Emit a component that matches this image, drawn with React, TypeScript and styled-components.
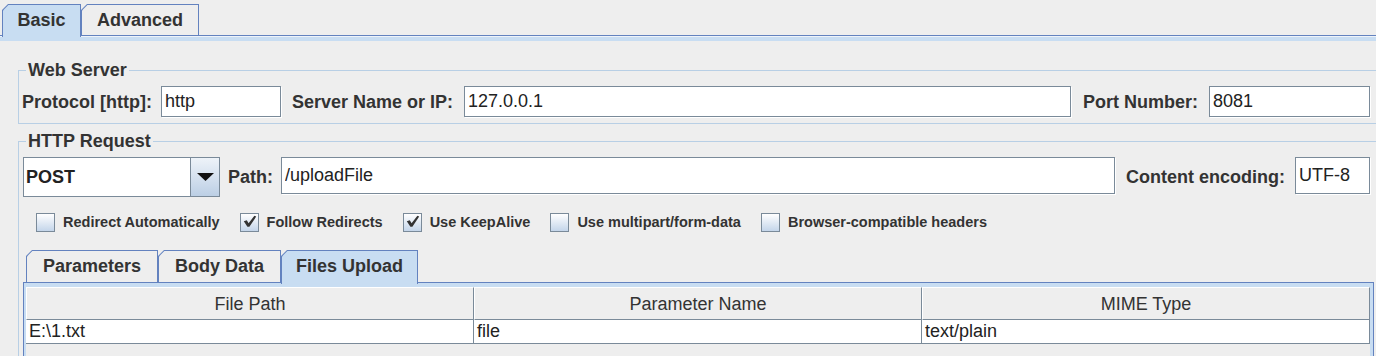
import styled, { createGlobalStyle } from "styled-components";

const GlobalStyle = createGlobalStyle`
  html, body {
    margin: 0;
    padding: 0;
    background: #eeeeee;
    overflow: hidden;
  }
  body {
    font-family: "Liberation Sans", Arial, sans-serif;
    color: #333333;
  }
  #root {
    width: 1380px;
  }
`;

const Window = styled.div`
  height: 352px;
  padding-top: 4px;
  background: #eeeeee;
  overflow: hidden;
`;

// tab strip (Metal look: cut top-left corner, blue band under the strip)
const TabRow = styled.div<{ $indent: number; $height: number }>`
  display: flex;
  align-items: flex-end;
  height: ${(p) => p.$height}px;
  padding-left: ${(p) => p.$indent}px;
  border-bottom: 1px solid #6382bf;
`;

const Tab = styled.div<{ $selected?: boolean; $height: number; $width: number }>`
  position: relative;
  z-index: ${(p) => (p.$selected ? 1 : 0)};
  box-sizing: border-box;
  width: ${(p) => p.$width}px;
  height: ${(p) => p.$height + (p.$selected ? 2 : 0)}px;
  margin-bottom: ${(p) => (p.$selected ? -2 : 0)}px;
  padding: 1px 1px 0;
  background: #6382bf;
  clip-path: polygon(0 6px, 6px 0, 100% 0, 100% 100%, 0 100%);
`;

const TabFace = styled.div<{ $selected?: boolean }>`
  box-sizing: border-box;
  height: 100%;
  padding-bottom: ${(p) => (p.$selected ? 2 : 0)}px;
  display: flex;
  align-items: center;
  justify-content: center;
  background: ${(p) => (p.$selected ? "#c8ddf2" : "#eeeeee")};
  clip-path: polygon(0 5.4px, 5.4px 0, 100% 0, 100% 100%, 0 100%);
  font-weight: bold;
  font-size: 18px;
  color: #333333;
  white-space: nowrap;
`;

const TabBand = styled.div`
  height: 4px;
  border-top: 1px solid #eef3f9;
  background: #c8ddf2;
`;

const Content = styled.div`
  padding-top: 20px;
`;

const Group = styled.fieldset`
  margin: 0 0 8px 18px;
  padding: 7px 5px 5px 4px;
  border: 1px solid #b8cfe5;
  min-width: 0;
`;

const GroupTitle = styled.legend`
  margin-left: 3px;
  padding: 0 2px;
  font-weight: bold;
  font-size: 18px;
  line-height: 18px;
  color: #333333;
`;

const FieldRow = styled.div<{ $height: number; $shift?: number }>`
  display: flex;
  align-items: flex-start;
  height: ${(p) => p.$height}px;
  margin: 0 4px 0 ${(p) => p.$shift ?? 0}px;
`;

const FieldLabel = styled.label<{ $before?: number; $after: number }>`
  align-self: center;
  padding-top: 1px;
  margin: 0 ${(p) => p.$after}px 0 ${(p) => p.$before ?? 0}px;
  font-weight: bold;
  font-size: 18px;
  color: #333333;
  white-space: nowrap;
`;

const TextField = styled.input<{ $width?: number; $height: number }>`
  box-sizing: border-box;
  flex: ${(p) => (p.$width ? `0 0 ${p.$width}px` : "1 1 auto")};
  min-width: 0;
  height: ${(p) => p.$height}px;
  margin: 0;
  padding: 0 3px;
  border: 1px solid #7a8a99;
  border-radius: 0;
  box-shadow: 1px 1px 0 #ffffff;
  background: #ffffff;
  font-family: "Liberation Sans", Arial, sans-serif;
  font-size: 18px;
  color: #222222;
  outline: none;
`;

const Combo = styled.div`
  box-sizing: border-box;
  display: flex;
  width: 197px;
  height: 40px;
  border: 1px solid #7a8a99;
  background: #ffffff;
`;

const ComboValue = styled.div`
  flex: 1;
  display: flex;
  align-items: center;
  padding-left: 2px;
  font-weight: bold;
  font-size: 18px;
  color: #222222;
`;

const ComboButton = styled.div`
  width: 28px;
  display: flex;
  align-items: center;
  justify-content: center;
  border-left: 1px solid #7a8a99;
  background: linear-gradient(to bottom, #eef3f9, #bccfe5);
`;

const CheckRow = styled.div`
  display: flex;
  align-items: center;
  gap: 20px;
  height: 34px;
  margin-top: 8px;
  padding-left: 13px;
`;

const CheckItem = styled.label`
  display: flex;
  align-items: center;
  gap: 8px;
  font-weight: bold;
  font-size: 14.5px;
  color: #333333;
  white-space: nowrap;
`;

const CheckBox = styled.span`
  box-sizing: border-box;
  width: 19px;
  height: 19px;
  border: 1px solid #7a8a99;
  background: linear-gradient(to bottom, #ffffff, #c4d5ea);
  display: flex;
`;

const InnerTabs = styled.div`
  margin-top: 11px;
`;

const TabPanel = styled.div`
  height: 120px;
  padding: 4px 3px 0 2px;
  background: #c8ddf2;
  border-left: 1px solid #6382bf;
  border-right: 1px solid #6382bf;
`;

const Viewport = styled.div`
  height: 100%;
  background: #eeeeee;
`;

const TableRow = styled.div<{ $head?: boolean }>`
  display: grid;
  grid-template-columns: repeat(3, 448px);
  height: ${(p) => (p.$head ? 33 : 24)}px;
`;

const HeadCell = styled.div`
  box-sizing: border-box;
  display: flex;
  align-items: center;
  justify-content: center;
  padding-top: 1px;
  border-top: 1px solid #ffffff;
  border-left: 1px solid #ffffff;
  border-right: 1px solid #7a8a99;
  border-bottom: 1px solid #7a8a99;
  background: #eeeeee;
  font-size: 18px;
  color: #333333;
`;

const Cell = styled.div`
  box-sizing: border-box;
  display: flex;
  align-items: center;
  padding-left: 3px;
  border-right: 1px solid #7a8a99;
  border-bottom: 1px solid #7a8a99;
  background: #ffffff;
  font-size: 18px;
  color: #222222;
`;

function Check({ checked }: { checked?: boolean }) {
  return (
    <CheckBox>
      {checked && (
        <svg width="17" height="17" viewBox="0 0 17 17">
          <polygon points="2.8,7.2 5.8,6.2 7.6,9.2 13.4,1.8 15.2,2.6 8.4,12.8 6.4,12.8" fill="#333333" />
        </svg>
      )}
    </CheckBox>
  );
}

const options = [
  { label: "Redirect Automatically", checked: false },
  { label: "Follow Redirects", checked: true },
  { label: "Use KeepAlive", checked: true },
  { label: "Use multipart/form-data", checked: false },
  { label: "Browser-compatible headers", checked: false },
];

const files = [{ path: "E:\\1.txt", name: "file", mime: "text/plain" }];

export default function App() {
  return (
    <>
      <GlobalStyle />
      <Window>
        <TabRow $indent={2} $height={31}>
          <Tab $selected $height={31} $width={79}>
            <TabFace $selected>Basic</TabFace>
          </Tab>
          <Tab $height={31} $width={118}>
            <TabFace>Advanced</TabFace>
          </Tab>
        </TabRow>
        <TabBand />

        <Content>
          <Group>
            <GroupTitle>Web Server</GroupTitle>
            <FieldRow $height={32} $shift={-1}>
              <FieldLabel $after={9}>Protocol [http]:</FieldLabel>
              <TextField $width={120} $height={31} defaultValue="http" />
              <FieldLabel $before={11} $after={11}>Server Name or IP:</FieldLabel>
              <TextField $height={31} defaultValue="127.0.0.1" />
              <FieldLabel $before={12} $after={11}>Port Number:</FieldLabel>
              <TextField $width={161} $height={31} defaultValue="8081" />
            </FieldRow>
          </Group>

          <Group>
            <GroupTitle>HTTP Request</GroupTitle>
            <FieldRow $height={40}>
              <Combo>
                <ComboValue>POST</ComboValue>
                <ComboButton>
                  <svg width="17" height="8" viewBox="0 0 17 8">
                    <polygon points="0,0 17,0 8.5,8" fill="#111111" />
                  </svg>
                </ComboButton>
              </Combo>
              <FieldLabel $before={8} $after={8}>Path:</FieldLabel>
              <TextField $height={37} defaultValue="/uploadFile" />
              <FieldLabel $before={11} $after={10}>Content encoding:</FieldLabel>
              <TextField $width={75} $height={37} defaultValue="UTF-8" />
            </FieldRow>

            <CheckRow>
              {options.map((o) => (
                <CheckItem key={o.label}>
                  <Check checked={o.checked} />
                  {o.label}
                </CheckItem>
              ))}
            </CheckRow>

            <InnerTabs>
              <TabRow $indent={3} $height={32}>
                <Tab $height={32} $width={132}>
                  <TabFace>Parameters</TabFace>
                </Tab>
                <Tab $height={32} $width={123}>
                  <TabFace>Body Data</TabFace>
                </Tab>
                <Tab $selected $height={32} $width={137}>
                  <TabFace $selected>Files Upload</TabFace>
                </Tab>
              </TabRow>
              <TabPanel>
                <Viewport>
                  <TableRow $head>
                    <HeadCell>File Path</HeadCell>
                    <HeadCell>Parameter Name</HeadCell>
                    <HeadCell>MIME Type</HeadCell>
                  </TableRow>
                  {files.map((f) => (
                    <TableRow key={f.path}>
                      <Cell>{f.path}</Cell>
                      <Cell>{f.name}</Cell>
                      <Cell>{f.mime}</Cell>
                    </TableRow>
                  ))}
                </Viewport>
              </TabPanel>
            </InnerTabs>
          </Group>
        </Content>
      </Window>
    </>
  );
}
